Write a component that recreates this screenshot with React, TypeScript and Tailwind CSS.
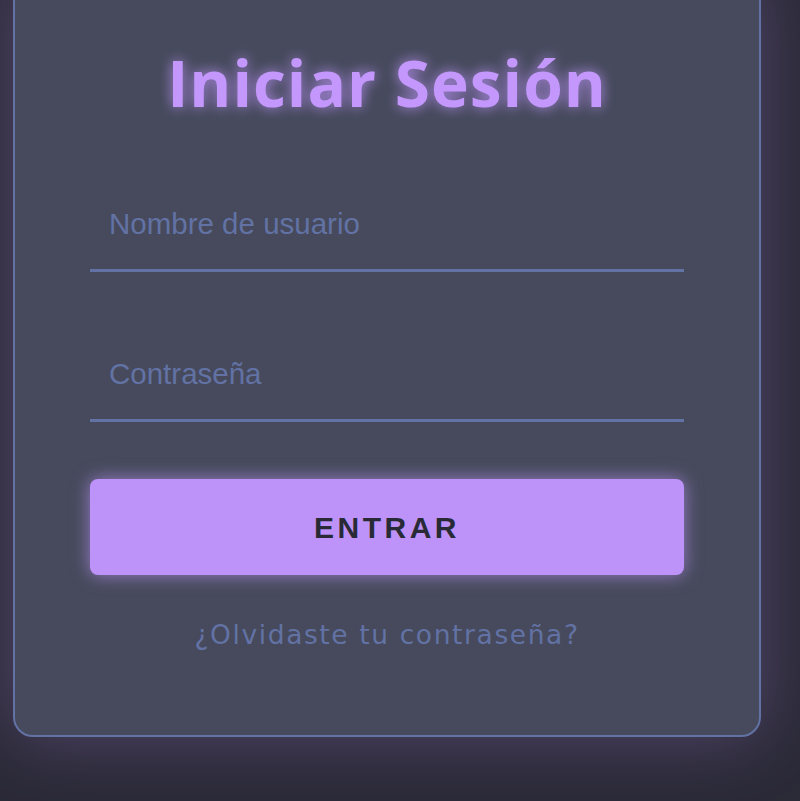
import React from "react";

export default function App() {
  return (
    <div className="min-h-[801px] h-[801px] overflow-hidden bg-[#2b2a37]">
      <div className="mt-[-30px] ml-[13px] w-[748px] rounded-[20px] border-2 border-[#6272a4] bg-[#464a5c] px-[75px] pt-[79px] pb-[86px] shadow-[0_0_70px_rgba(189,147,249,0.28)]">
        <h1 className="text-center font-['Open_Sans',sans-serif] text-[64px] font-bold leading-none tracking-[1px] text-[#c397fb] [text-shadow:0_0_14px_rgba(189,147,249,0.9)]">
          Iniciar Sesión
        </h1>
        <div className="mt-[64px] flex flex-col gap-[57px]">
          <input
            type="text"
            placeholder="Nombre de usuario"
            className="h-[93px] w-full border-0 border-b-[3px] border-[#6272a4] bg-transparent pl-[19px] font-['Liberation_Sans',Arial,sans-serif] text-[29.5px] text-[#f8f8f2] outline-none placeholder:text-[#6272a4]"
          />
          <input
            type="password"
            placeholder="Contraseña"
            className="h-[93px] w-full border-0 border-b-[3px] border-[#6272a4] bg-transparent pl-[19px] font-['Liberation_Sans',Arial,sans-serif] text-[29.5px] text-[#f8f8f2] outline-none placeholder:text-[#6272a4]"
          />
          <button className="flex h-[96px] w-full items-center justify-center rounded-[8px] bg-[#bd93f9] font-['Liberation_Sans',Arial,sans-serif] text-[30px] font-bold tracking-[3.5px] text-[#282a36] shadow-[0_0_18px_rgba(189,147,249,0.7)]">
            ENTRAR
          </button>
        </div>
        <p className="mt-[47px] text-center font-['DejaVu_Sans',sans-serif] text-[26.5px] leading-none tracking-[1.6px] text-[#6272a4]">
          ¿Olvidaste tu contraseña?
        </p>
      </div>
    </div>
  );
}
